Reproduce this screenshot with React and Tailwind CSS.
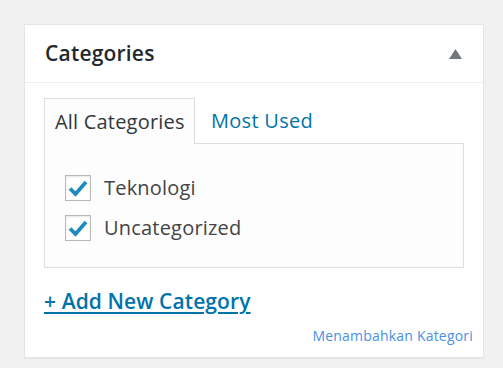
import React from "react";

const kategori = ["Teknologi", "Uncategorized"];

function Centang() {
	return (
		<span className="flex h-[26px] w-[26px] items-center justify-center border border-[#b4b9be] bg-white shadow-[inset_0_1px_2px_rgba(0,0,0,0.1)]">
			<svg width="20" height="18" viewBox="0 0 20 18">
				<path d="M2 9.5 L7.5 15 L18 3" fill="none" stroke="#1e8cbe" strokeWidth="3.8" strokeLinejoin="miter" />
			</svg>
		</span>
	);
}

export default function App() {
	return (
		<div className="h-[368px] w-[503px] bg-[#f1f1f1] pl-[24px] pt-[24px] font-['Open_Sans',sans-serif]">
			<div className="w-[460px] border border-[#e5e5e5] bg-white shadow-[0_1px_1px_rgba(0,0,0,0.04)]">
				<div className="flex h-[58px] items-center justify-between border-b border-[#eeeeee] pl-[20px] pr-[21px]">
					<h2 className="text-[21px] font-semibold tracking-[0.2px] text-[#23282d]">Categories</h2>
					<svg width="13" height="10" viewBox="0 0 13 10">
						<path d="M6.5 0 L13 10 L0 10 Z" fill="#72777c" />
					</svg>
				</div>

				<div className="px-[19px] pb-[10px] pt-[15px]">
					<div className="flex items-end">
						<div className="relative z-10 -mb-px flex h-[46px] w-[151px] items-center border border-b-0 border-[#dddddd] bg-[#fdfdfd] pl-[10px] text-[20px] tracking-[0.2px] text-[#32373c]">
							All Categories
						</div>
						<div className="flex h-[45px] items-center pl-[16px] text-[20px] tracking-[0.3px] text-[#0073aa]">
							Most Used
						</div>
					</div>
					<div className="w-[420px] border border-[#dddddd] bg-[#fdfdfd] pl-[20px] pb-[26px] pt-[31px]">
						<ul className="flex flex-col gap-[14px]">
							{kategori.map((nama) => (
								<li key={nama} className="flex items-center gap-[13px]">
									<Centang />
									<span className="text-[20px] leading-[26px] tracking-[0.2px] text-[#444444]">{nama}</span>
								</li>
							))}
						</ul>
					</div>

					<div className="mt-[18px]">
						<a href="#" className="text-[21px] font-semibold tracking-[0.1px] text-[#0073aa] underline decoration-[2px] underline-offset-[3px]">
							+ Add New Category
						</a>
					</div>
					<div className="mt-[5px] text-right">
						<span className="mr-[-9px] text-[14px] tracking-[0.2px] text-[#4a90e2]">Menambahkan Kategori</span>
					</div>
				</div>
			</div>
		</div>
	);
}
